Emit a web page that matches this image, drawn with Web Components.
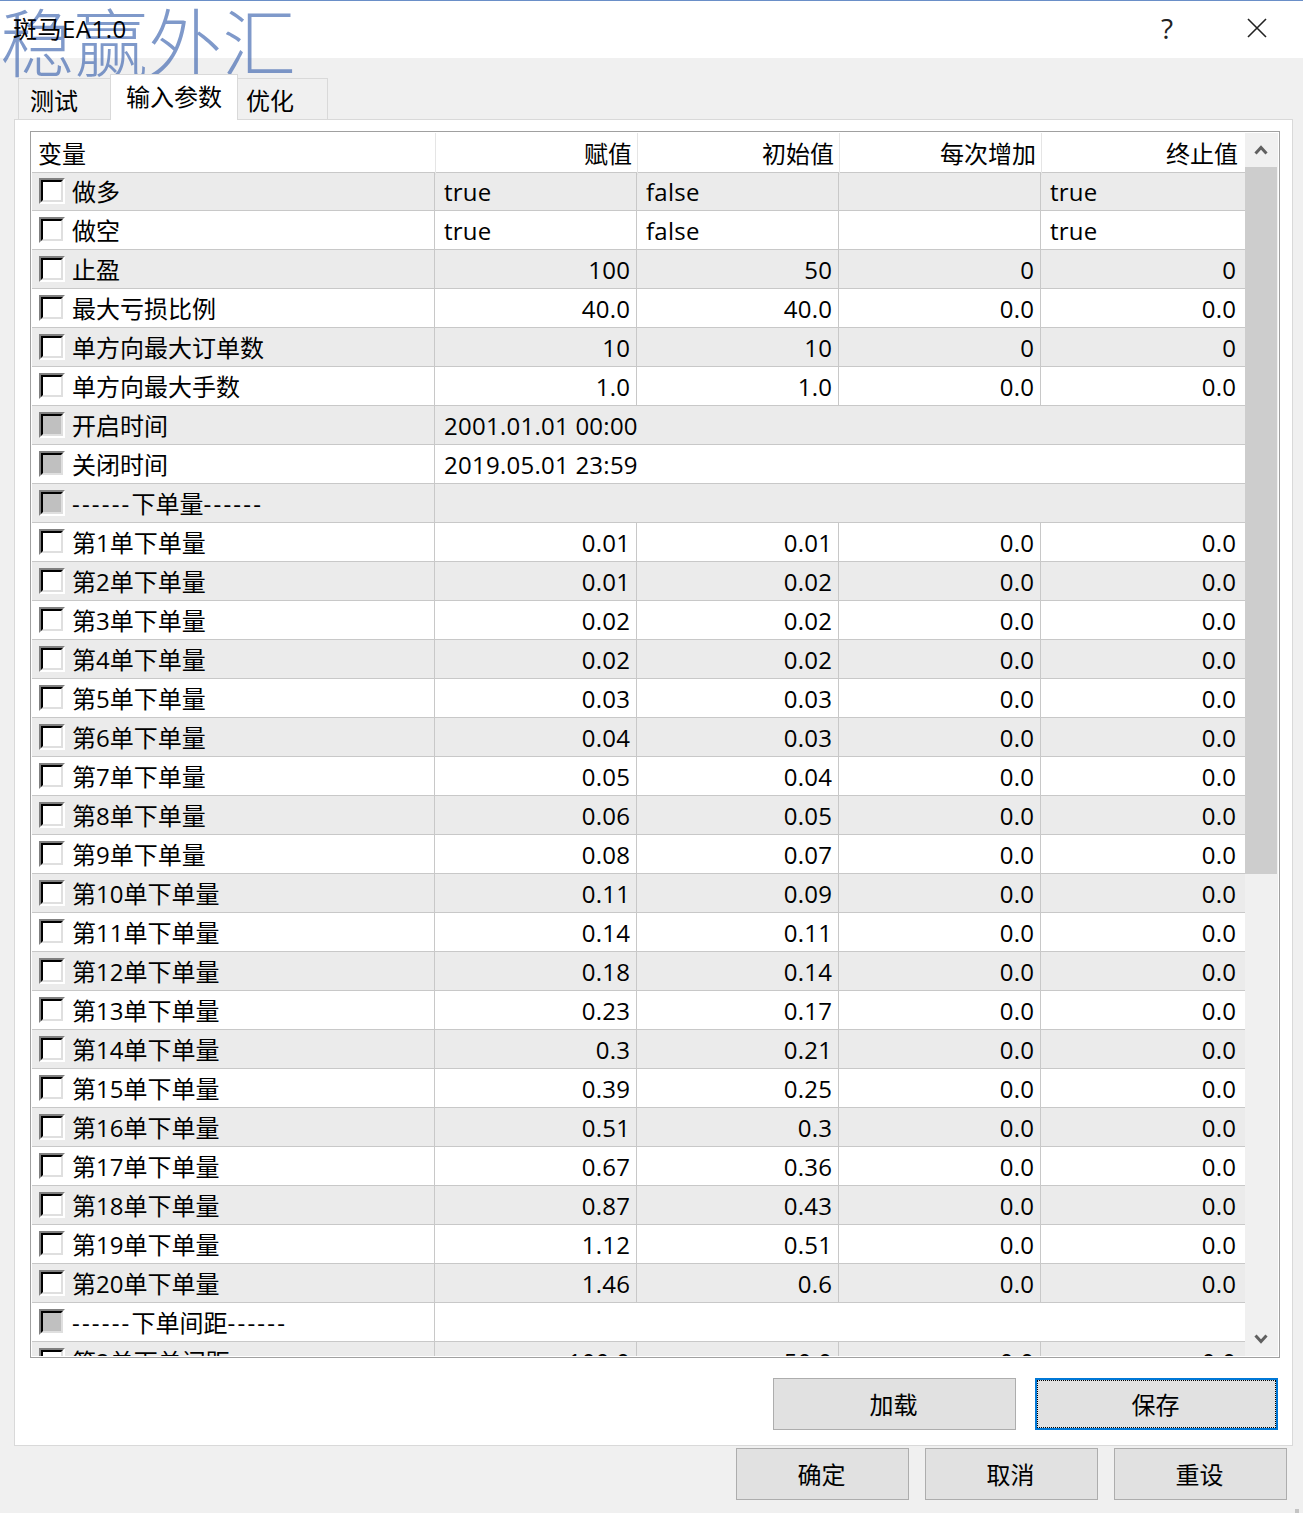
<!DOCTYPE html>
<html lang="zh">
<head>
<meta charset="utf-8">
<title>斑马EA1.0</title>
<style>
    html, body { margin: 0; padding: 0; background: #f0f0f0; }
    body { font: 24px "Open Sans", "Noto Sans CJK SC", sans-serif; color: #000; }
</style>
</head>
<body>
<mt-dialog></mt-dialog>
<script>
const mtCheckboxTemplate = document.createElement('template');
mtCheckboxTemplate.innerHTML = `
    <style>
        :host {
            display: block;
            box-sizing: border-box;
            width: 26px;
            height: 26px;
            border: 2px solid;
            border-color: #808080 #fff #fff #808080;
        }
        div {
            box-sizing: border-box;
            height: 100%;
            border: 2px solid;
            border-color: #000 #dfdfdf #dfdfdf #000;
            background: #fff;
        }
        :host([mixed]) div { background: #c0c0c0; }
    </style>
    <div></div>
`;
class MtCheckbox extends HTMLElement {
    constructor() {
        super();
        this.attachShadow({ mode: 'open' });
    }
    connectedCallback() {
        this.shadowRoot.appendChild(mtCheckboxTemplate.content.cloneNode(true));
    }
}

const mtButtonTemplate = document.createElement('template');
mtButtonTemplate.innerHTML = `
    <style>
        :host {
            display: flex;
            box-sizing: border-box;
            width: 173px;
            height: 52px;
            border: 1px solid #adadad;
            padding: 0 2px 2px 0;
            background: #e1e1e1;
            align-items: center;
            justify-content: center;
        }
        :host([wide]) { width: 243px; }
        :host([focused]) {
            border: 2px solid #0078d7;
            outline: 1px dotted #000;
            outline-offset: -3px;
        }
    </style>
    <slot></slot>
`;
class MtButton extends HTMLElement {
    constructor() {
        super();
        this.attachShadow({ mode: 'open' });
    }
    connectedCallback() {
        this.shadowRoot.appendChild(mtButtonTemplate.content.cloneNode(true));
    }
}

const mtTitlebarTemplate = document.createElement('template');
mtTitlebarTemplate.innerHTML = `
    <style>
        :host {
            display: flex;
            box-sizing: border-box;
            height: 58px;
            border-top: 1px solid #6a8fc8;
            background: #fff;
            align-items: center;
            padding: 0 36px 3px 13px;
        }
        .title { flex: 1; position: relative; z-index: 2; margin-bottom: 2px; letter-spacing: 0.5px; }
        .help { margin-right: 74px; font-size: 28px; color: #222; }
        svg { display: block; }
        .mark {
            position: absolute;
            left: 0;
            top: -6px;
            z-index: 1;
            font-size: 74px;
            font-weight: 300;
            line-height: 98px;
            color: rgba(60, 100, 175, 0.66);
            white-space: nowrap;
            pointer-events: none;
        }
    </style>
    <div class="title"><slot></slot></div>
    <div class="mark">稳赢外汇</div>
    <div class="help">?</div>
    <svg width="20" height="20" viewBox="0 0 20 20"><path d="M1 1L19 19M19 1L1 19" fill="none" stroke="#222" stroke-width="1.6"/></svg>
`;
class MtTitlebar extends HTMLElement {
    constructor() {
        super();
        this.attachShadow({ mode: 'open' });
    }
    connectedCallback() {
        this.shadowRoot.appendChild(mtTitlebarTemplate.content.cloneNode(true));
    }
}

const mtTabTemplate = document.createElement('template');
mtTabTemplate.innerHTML = `
    <style>
        :host {
            display: flex;
            box-sizing: border-box;
            height: 41px;
            border: 1px solid #d9d9d9;
            border-bottom: 0;
            background: #f0f0f0;
            align-items: center;
        }
        :host([active]) {
            position: relative;
            z-index: 1;
            height: 46px;
            margin-bottom: -1px;
            background: #fff;
            padding-bottom: 4px;
        }
    </style>
    <slot></slot>
`;
class MtTab extends HTMLElement {
    constructor() {
        super();
        this.attachShadow({ mode: 'open' });
    }
    connectedCallback() {
        this.shadowRoot.appendChild(mtTabTemplate.content.cloneNode(true));
    }
}

const mtScrollbarTemplate = document.createElement('template');
mtScrollbarTemplate.innerHTML = `
    <style>
        :host {
            display: flex;
            flex-direction: column;
            width: 33px;
            height: 100%;
            background: #f0f0f0;
        }
        .arrow {
            display: flex;
            height: 34px;
            align-items: center;
            justify-content: center;
        }
        .thumb { width: 32px; height: 707px; background: #cdcdcd; }
        .rest { flex: 1; }
        svg { display: block; margin-right: 1px; }
    </style>
    <div class="arrow"><svg width="14" height="10" viewBox="0 0 14 10"><path d="M1.5 8.5L7 2.5L12.5 8.5" fill="none" stroke="#606060" stroke-width="3"/></svg></div>
    <div class="thumb"></div>
    <div class="rest"></div>
    <div class="arrow"><svg width="14" height="10" viewBox="0 0 14 10"><path d="M1.5 1.5L7 7.5L12.5 1.5" fill="none" stroke="#606060" stroke-width="3"/></svg></div>
`;
class MtScrollbar extends HTMLElement {
    constructor() {
        super();
        this.attachShadow({ mode: 'open' });
    }
    connectedCallback() {
        this.shadowRoot.appendChild(mtScrollbarTemplate.content.cloneNode(true));
    }
}

const mtParamRowTemplate = document.createElement('template');
mtParamRowTemplate.innerHTML = `
    <style>
        :host {
            display: grid;
            grid-template-columns: 403px 202px 202px 202px 203px;
            box-sizing: border-box;
            height: 39px;
            border-bottom: 1px solid #c8c8c8;
            background: #fff;
            line-height: 38px;
            white-space: nowrap;
            --row-top: 1px;
        }
        :host([shaded]) { background: #ebebeb; }
        :host([first]) { height: 38px; --row-top: 0px; }
        .cell {
            box-sizing: border-box;
            border-right: 1px solid #c8c8c8;
            padding: var(--row-top) 5.75px 0 9px;
            letter-spacing: 0.25px;
            text-align: right;
        }
        .cell:last-child { border-right: 0; padding-right: 7.75px; }
        .left { text-align: left; }
        .span { grid-column: 2 / 6; text-align: left; border-right: 0; }
        .name {
            display: flex;
            align-items: flex-start;
            gap: 7px;
            padding: var(--row-top) 0 0 7px;
            letter-spacing: 0;
            text-align: left;
        }
        mt-checkbox { margin-top: 5px; }
        .dash { letter-spacing: 2.2px; }
    </style>
`;
class MtParamRow extends HTMLElement {
    constructor() {
        super();
        this.attachShadow({ mode: 'open' });
    }
    connectedCallback() {
        const root = this.shadowRoot;
        root.appendChild(mtParamRowTemplate.content.cloneNode(true));
        const row = this.row;
        const name = document.createElement('div');
        name.className = 'cell name';
        const check = document.createElement('mt-checkbox');
        if (row.mixed) check.setAttribute('mixed', '');
        const label = document.createElement('span');
        row.name.split(/(-+)/).forEach(part => {
            if (!part) return;
            const piece = document.createElement('span');
            if (part[0] === '-') piece.className = 'dash';
            piece.textContent = part;
            label.appendChild(piece);
        });
        name.append(check, label);
        root.appendChild(name);
        if (row.mixed) {
            const cell = document.createElement('div');
            cell.className = 'cell span';
            cell.textContent = row.values[0] || '';
            root.appendChild(cell);
            return;
        }
        row.values.forEach(value => {
            const cell = document.createElement('div');
            cell.className = row.bool ? 'cell left' : 'cell';
            cell.textContent = value;
            root.appendChild(cell);
        });
    }
}

const paramRows = [
    { name: '做多', bool: true, values: ['true', 'false', '', 'true'] },
    { name: '做空', bool: true, values: ['true', 'false', '', 'true'] },
    { name: '止盈', values: ['100', '50', '0', '0'] },
    { name: '最大亏损比例', values: ['40.0', '40.0', '0.0', '0.0'] },
    { name: '单方向最大订单数', values: ['10', '10', '0', '0'] },
    { name: '单方向最大手数', values: ['1.0', '1.0', '0.0', '0.0'] },
    { name: '开启时间', mixed: true, values: ['2001.01.01 00:00'] },
    { name: '关闭时间', mixed: true, values: ['2019.05.01 23:59'] },
    { name: '------下单量------', mixed: true, values: [] }
];
[
    ['0.01', '0.01'], ['0.01', '0.02'], ['0.02', '0.02'], ['0.02', '0.02'], ['0.03', '0.03'],
    ['0.04', '0.03'], ['0.05', '0.04'], ['0.06', '0.05'], ['0.08', '0.07'], ['0.11', '0.09'],
    ['0.14', '0.11'], ['0.18', '0.14'], ['0.23', '0.17'], ['0.3', '0.21'], ['0.39', '0.25'],
    ['0.51', '0.3'], ['0.67', '0.36'], ['0.87', '0.43'], ['1.12', '0.51'], ['1.46', '0.6']
].forEach((lots, i) => {
    paramRows.push({ name: `第${i + 1}单下单量`, values: [lots[0], lots[1], '0.0', '0.0'] });
});
paramRows.push({ name: '------下单间距------', mixed: true, values: [] });
paramRows.push({ name: '第2单下单间距', values: ['100.0', '50.0', '0.0', '0.0'] });

const mtParamTableTemplate = document.createElement('template');
mtParamTableTemplate.innerHTML = `
    <style>
        :host {
            display: grid;
            grid-template-columns: 1213px 33px;
            box-sizing: border-box;
            width: 1250px;
            height: 1227px;
            border: 1px solid #a0a0a0;
            padding: 1px;
            background: #fff;
        }
        .list { height: 1223px; overflow: hidden; }
        .head {
            display: grid;
            grid-template-columns: 404px 202px 202px 202px 202px;
            box-sizing: border-box;
            height: 40px;
            border-bottom: 1px solid #c8c8c8;
            line-height: 42px;
            white-space: nowrap;
        }
        .head div {
            border-right: 1px solid #e5e5e5;
            padding-right: 5px;
            text-align: right;
        }
        .head div:first-child { padding-left: 6px; text-align: left; }
        .head div:last-child { border-right: 0; padding-right: 6px; }
    </style>
    <div class="list">
        <div class="head"><div>变量</div><div>赋值</div><div>初始值</div><div>每次增加</div><div>终止值</div></div>
    </div>
    <mt-scrollbar></mt-scrollbar>
`;
class MtParamTable extends HTMLElement {
    constructor() {
        super();
        this.attachShadow({ mode: 'open' });
    }
    connectedCallback() {
        const template = mtParamTableTemplate.content.cloneNode(true);
        const list = template.querySelector('.list');
        paramRows.forEach((row, i) => {
            const el = document.createElement('mt-param-row');
            el.row = row;
            if (i % 2 === 0) el.setAttribute('shaded', '');
            if (i === 0) el.setAttribute('first', '');
            list.appendChild(el);
        });
        this.shadowRoot.appendChild(template);
    }
}

const mtDialogTemplate = document.createElement('template');
mtDialogTemplate.innerHTML = `
    <style>
        :host {
            display: block;
            position: relative;
            width: 1303px;
            height: 1513px;
            overflow: hidden;
            background: #f0f0f0;
        }
        .tabs {
            display: flex;
            align-items: flex-end;
            height: 61px;
            padding-left: 18px;
        }
        .tabs mt-tab:nth-child(1) { width: 92px; padding-left: 11px; border-right: 0; }
        .tabs mt-tab:nth-child(2) { width: 128px; padding-left: 15px; }
        .tabs mt-tab:nth-child(3) { width: 90px; padding-left: 8px; border-left: 0; }
        .panel {
            box-sizing: border-box;
            width: 1279px;
            margin-left: 14px;
            border: 1px solid #d9d9d9;
            padding: 11px 12px 15px 15px;
            background: #fff;
        }
        .panel-actions {
            display: flex;
            justify-content: flex-end;
            gap: 19px;
            margin: 20px 2px 0 0;
        }
        .actions {
            display: flex;
            justify-content: flex-end;
            gap: 16px;
            margin-top: 2px;
            padding-right: 16px;
        }
        .grip {
            position: absolute;
            right: 4px;
            bottom: 0;
            width: 4px;
            height: 4px;
            background: #c4c4c4;
        }
    </style>
    <mt-titlebar>斑马EA1.0</mt-titlebar>
    <div class="tabs">
        <mt-tab>测试</mt-tab>
        <mt-tab active>输入参数</mt-tab>
        <mt-tab>优化</mt-tab>
    </div>
    <div class="panel">
        <mt-param-table></mt-param-table>
        <div class="panel-actions">
            <mt-button wide>加载</mt-button>
            <mt-button wide focused>保存</mt-button>
        </div>
    </div>
    <div class="actions">
        <mt-button>确定</mt-button>
        <mt-button>取消</mt-button>
        <mt-button>重设</mt-button>
    </div>
    <div class="grip"></div>
`;
class MtDialog extends HTMLElement {
    constructor() {
        super();
        this.attachShadow({ mode: 'open' });
    }
    connectedCallback() {
        this.shadowRoot.appendChild(mtDialogTemplate.content.cloneNode(true));
    }
}

customElements.define('mt-checkbox', MtCheckbox);
customElements.define('mt-button', MtButton);
customElements.define('mt-titlebar', MtTitlebar);
customElements.define('mt-tab', MtTab);
customElements.define('mt-scrollbar', MtScrollbar);
customElements.define('mt-param-row', MtParamRow);
customElements.define('mt-param-table', MtParamTable);
customElements.define('mt-dialog', MtDialog);
</script>
</body>
</html>
